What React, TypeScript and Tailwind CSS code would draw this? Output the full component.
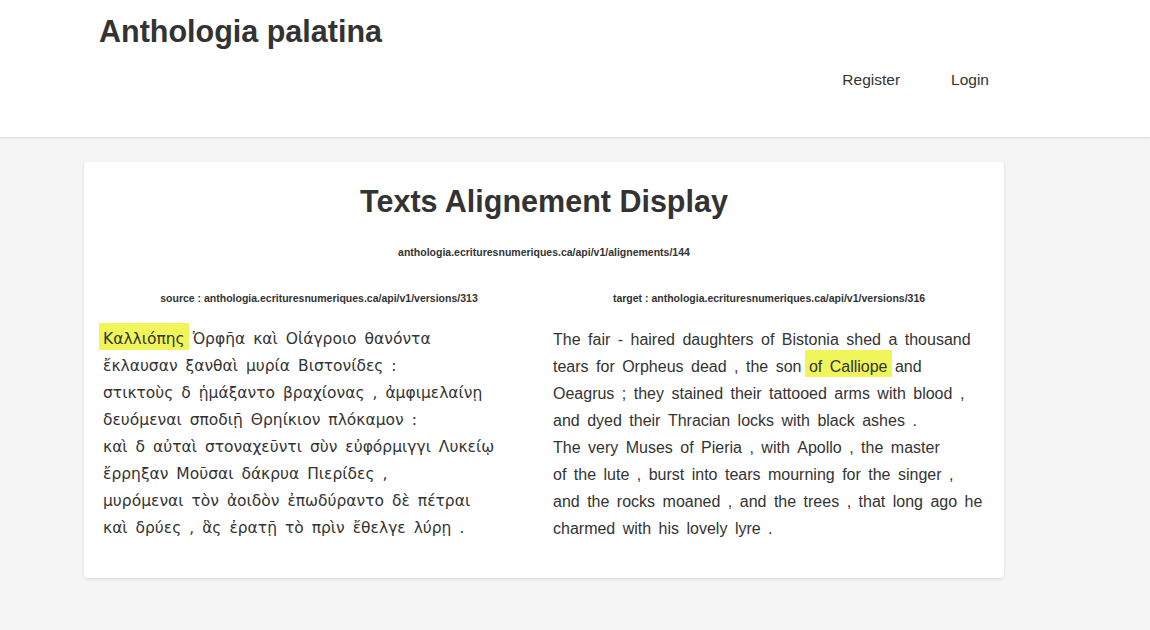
const source: string[][] = [
  ["Καλλιόπης*", "Ὀρφῆα", "καὶ", "Οἰάγροιο", "θανόντα"],
  ["ἔκλαυσαν", "ξανθαὶ", "μυρία", "Βιστονίδες", ":"],
  ["στικτοὺς", "δ", "ᾑμάξαντο", "βραχίονας", ",", "ἀμφιμελαίνῃ"],
  ["δευόμεναι", "σποδιῇ", "Θρηίκιον", "πλόκαμον", ":"],
  ["καὶ", "δ", "αὐταὶ", "στοναχεῦντι", "σὺν", "εὐφόρμιγγι", "Λυκείῳ"],
  ["ἔρρηξαν", "Μοῦσαι", "δάκρυα", "Πιερίδες", ","],
  ["μυρόμεναι", "τὸν", "ἀοιδὸν", "ἐπωδύραντο", "δὲ", "πέτραι"],
  ["καὶ", "δρύες", ",", "ἃς", "ἐρατῇ", "τὸ", "πρὶν", "ἔθελγε", "λύρῃ", "."],
];

const target: string[][] = [
  ["The", "fair", "-", "haired", "daughters", "of", "Bistonia", "shed", "a", "thousand"],
  ["tears", "for", "Orpheus", "dead", ",", "the", "son", "of Calliope*", "and"],
  ["Oeagrus", ";", "they", "stained", "their", "tattooed", "arms", "with", "blood", ","],
  ["and", "dyed", "their", "Thracian", "locks", "with", "black", "ashes", "."],
  ["The", "very", "Muses", "of", "Pieria", ",", "with", "Apollo", ",", "the", "master"],
  ["of", "the", "lute", ",", "burst", "into", "tears", "mourning", "for", "the", "singer", ","],
  ["and", "the", "rocks", "moaned", ",", "and", "the", "trees", ",", "that", "long", "ago", "he"],
  ["charmed", "with", "his", "lovely", "lyre", "."],
];

function Verse({ lines, greek }: { lines: string[][]; greek?: boolean }) {
  return (
    <div
      className={
        greek
          ? "text-[15.5px] leading-[19px] text-[#333] pl-[2.5px]"
          : "text-[16px] leading-[19px] text-[#333] pl-[2.5px]"
      }
      style={greek ? { fontFamily: '"DejaVu Sans", "Liberation Sans", sans-serif' } : undefined}
    >
      {lines.map((line, i) => (
        <div key={i} className="whitespace-nowrap">
          {line.map((w, j) => {
            const hl = w.endsWith("*");
            return (
              <span key={j}>
                {hl ? (
                  <span className="inline-block pt-[7px] pb-[1px] px-[2.5px] -mx-[2.5px] bg-[#f0f65a]">
                    {w
                      .slice(0, -1)
                      .split(" ")
                      .map((p, k, arr) => (
                        <span key={k}>
                          <span className="inline-block px-[1.5px]">{p}</span>
                          {k < arr.length - 1 ? " " : ""}
                        </span>
                      ))}
                  </span>
                ) : (
                  <span className="inline-block pt-[7px] pb-[1px] px-[1.5px]">{w}</span>
                )}
                {j < line.length - 1 ? " " : ""}
              </span>
            );
          })}
        </div>
      ))}
    </div>
  );
}

export default function App() {
  return (
    <div className="min-h-screen bg-[#f5f5f5] text-[#333]" style={{ fontFamily: '"Liberation Sans", Arial, sans-serif' }}>
      <header className="bg-white border-b border-[#e2e2e2] shadow-[0_1px_2px_rgba(0,0,0,0.06)] h-[138px]">
        <div className="ml-[84px] w-[920px] px-[15px] pt-[13px]">
          <h1 className="text-[30.5px] font-bold leading-[36px]">Anthologia palatina</h1>
          <nav className="flex justify-end gap-[51px] mt-[21px] text-[15.5px] leading-[20px]">
            <a className="text-[#333]">Register</a>
            <a className="text-[#333]">Login</a>
          </nav>
        </div>
      </header>

      <main className="pt-[24px] pb-10">
        <div className="ml-[84px] w-[920px] bg-white rounded-[3px] shadow-[0_1px_3px_rgba(0,0,0,0.12)] px-[15px] pt-[23px] pb-[39px]">
          <h2 className="text-center text-[30.5px] font-bold leading-[33px]">Texts Alignement Display</h2>
          <p className="text-center text-[10.5px] font-bold leading-[14px] mt-[27px]">
            anthologia.ecrituresnumeriques.ca/api/v1/alignements/144
          </p>
          <div className="grid grid-cols-2 gap-[10px] mt-[32px]">
            <div>
              <p className="text-center text-[10.5px] font-bold leading-[14px]">
                source : anthologia.ecrituresnumeriques.ca/api/v1/versions/313
              </p>
              <div className="mt-[18px]">
                <Verse lines={source} greek />
              </div>
            </div>
            <div>
              <p className="text-center text-[10.5px] font-bold leading-[14px]">
                target : anthologia.ecrituresnumeriques.ca/api/v1/versions/316
              </p>
              <div className="mt-[18px]">
                <Verse lines={target} />
              </div>
            </div>
          </div>
        </div>
      </main>
    </div>
  );
}
